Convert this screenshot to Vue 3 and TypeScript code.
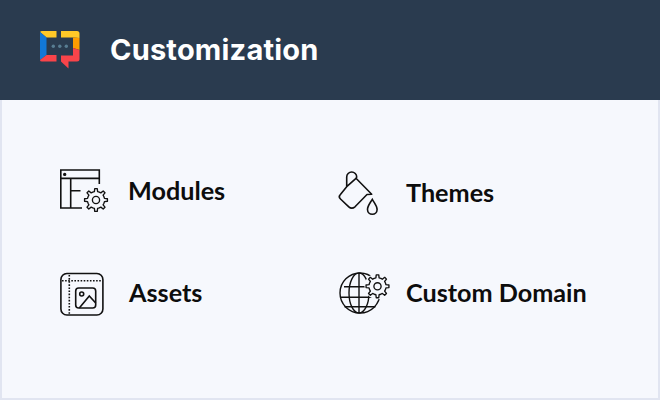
<script setup lang="ts">
function gear(cx: number, cy: number, ro: number, ri: number, teeth = 8): string {
  const step = (Math.PI * 2) / teeth
  const pts: string[] = []
  for (let i = 0; i < teeth; i++) {
    const a = i * step - Math.PI / 2
    const offsets: [number, number][] = [
      [-0.5, ri], [-0.24, ri], [-0.14, ro], [0.14, ro], [0.24, ri],
    ]
    for (const [o, r] of offsets) {
      const t = a + o * step
      pts.push(`${(cx + r * Math.cos(t)).toFixed(2)} ${(cy + r * Math.sin(t)).toFixed(2)}`)
    }
  }
  return `M${pts.join('L')}Z`
}
const gearA = gear(36, 34, 11.5, 8.6)
const gearB = gear(39.5, 18.3, 11.5, 8.6)
</script>

<template>
  <div class="page">
    <header class="top">
      <svg class="logo" width="40" height="38" viewBox="0 0 40 38">
        <path fill="#ffc928" d="M2 0H16.5V6.5H6.5L0 1Q.6 0 2 0Z" />
        <path fill="#1178d8" d="M0 1L6.5 6.5V24L0 29Z" />
        <path fill="#f9444a" d="M0 29L6.5 24H16.5V30.5H2Q0 30.5 0 29Z" />
        <path fill="#ffc928" d="M21 0H37Q39.5 0 39.5 2.5V7L33 6.5H21Z" />
        <path fill="#ff9d00" d="M33 6.5L39.5 7V19L33 17Z" />
        <path fill="#f9444a" d="M33 17L39.5 19V28Q39.5 30.5 37 30.5H28.5V37.5L21.5 31L21 30.5V24.5H33Z" />
        <circle cx="13.3" cy="15.2" r="1.7" fill="#587d92" />
        <circle cx="19.8" cy="15.2" r="1.7" fill="#587d92" />
        <circle cx="26.3" cy="15.2" r="1.7" fill="#587d92" />
      </svg>
      <h1 class="title">Customization</h1>
    </header>
    <main class="grid">
      <div class="item">
        <svg class="ico" viewBox="0 0 50 50" width="50" height="50">
          <g class="ln">
            <path d="M22 42H.8V4H39.3V18" />
            <path d="M.8 12.4H39.3M10.7 12.4V42M10.7 24.7H20.5" />
            <circle cx="4.7" cy="8.4" r=".9" fill="#111" />
            <path class="cog" :d="gearA" stroke-linejoin="round" />
            <circle class="cog" cx="36" cy="34" r="3.6" />
          </g>
        </svg>
        <span class="label lift">Modules</span>
      </div>
      <div class="item">
        <svg class="ico" viewBox="0 0 50 50" width="50" height="50">
          <g class="ln">
            <path d="M8.7 20.7L18 12.3L33.7 28.3L29 28.5L17 40.8Q13.7 43.5 10.8 40.8L2.5 33Q.3 31 2 29L8.7 20.7V11A5 5 0 0 1 18.7 11L18 12.3" stroke-linejoin="round" />
            <path d="M34.3 33.3C31.5 38 29.5 40 29.5 43.5A4.8 4.8 0 0 0 39.1 43.5C39.1 40 37 38 34.3 33.3Z" />
          </g>
        </svg>
        <span class="label drop">Themes</span>
      </div>
      <div class="item">
        <svg class="ico" viewBox="0 0 50 50" width="50" height="50">
          <g class="ln">
            <rect x=".9" y="5.5" width="42" height="41.5" rx="6" />
            <path class="dots" d="M2 12.8H42M9.3 7V46" />
            <rect x="15.7" y="20" width="20" height="20" rx="3" />
            <circle cx="21.7" cy="26" r="2" />
            <path d="M19.3 40L29.3 28L35.7 35" />
          </g>
        </svg>
        <span class="label nudge">Assets</span>
      </div>
      <div class="item">
        <svg class="ico" viewBox="0 0 50 50" width="50" height="50">
          <g class="ln thin">
            <circle cx="22" cy="25" r="20" />
            <ellipse cx="21" cy="25" rx="10" ry="20" />
            <path d="M21 5V45M2 29.3H42M6 18.7H38M6.5 38.7H37.5" />
            <circle cx="39.5" cy="18.3" r="13" fill="#f6f8fd" stroke="none" />
            <path class="cog" :d="gearB" stroke-linejoin="round" />
            <circle class="cog" cx="39.5" cy="18.3" r="3.6" />
          </g>
        </svg>
        <span class="label domain">Custom Domain</span>
      </div>
    </main>
  </div>
</template>

<style>
html, body { margin: 0; padding: 0; }
</style>

<style scoped>
.page {
  width: 660px;
  height: 400px;
  overflow: hidden;
  display: flex;
  flex-direction: column;
  background: #f6f8fd;
}
.top {
  height: 100px;
  flex: none;
  background: #2a3b4f;
  display: flex;
  align-items: center;
  padding-left: 40px;
  gap: 30px;
}
.logo { display: block; margin-top: -1px; }
.title {
  margin: -2px 0 0;
  font: 700 29px "Inter", sans-serif;
  letter-spacing: 0.2px;
  color: #fff;
}
.grid {
  flex: 1;
  box-sizing: border-box;
  border: solid #e1e5f1;
  border-width: 0 2px 2px;
  padding: 66px 0 0 58px;
  display: grid;
  grid-template-columns: 278px 278px;
  grid-auto-rows: 50px;
  row-gap: 52px;
}
.item {
  display: flex;
  align-items: center;
  gap: 18px;
}
.ico { flex: none; overflow: visible; }
.ln { fill: none; stroke: #111; stroke-width: 1.6; }
.ln.thin { stroke-width: 1.4; }
.ln .cog { stroke-width: 1.35; }
.dots { stroke-dasharray: 1.6 1.5; }
.label {
  font: 700 25.2px "Lato", sans-serif;
  color: #0d0d0d;
  margin-top: -2px;
}
.nudge { margin-left: 1px; }
.lift { margin-top: -3px; }
.drop { margin-top: 1px; }
.domain { margin-top: -3px; }
</style>
